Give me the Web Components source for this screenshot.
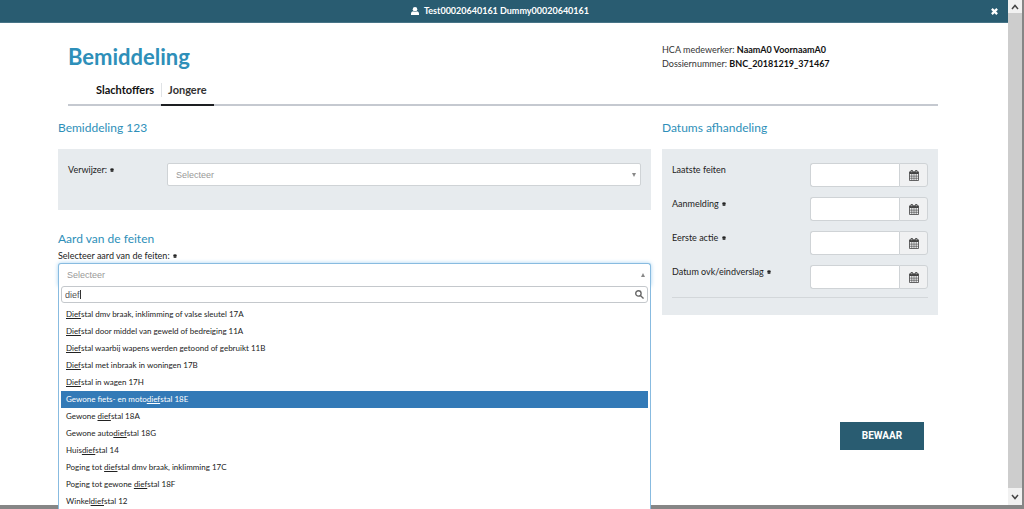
<!DOCTYPE html>
<html lang="nl">
<head>
<meta charset="utf-8">
<title>Bemiddeling</title>
<style>
html, body { margin: 0; height: 100%; overflow: hidden; }
body { background: #868686; font-family: Lato, "Open Sans", sans-serif; font-size: 9px; line-height: 14px; color: #222; }
</style>
</head>
<body>
<hca-dialog>
  <case-header slot="header"></case-header>
  <nav-tabs slot="header"></nav-tabs>
  <form-section slot="left" heading="Bemiddeling 123"><referrer-field></referrer-field></form-section>
  <facts-picker slot="left"></facts-picker>
  <form-section slot="right" heading="Datums afhandeling">
    <date-field label="Laatste feiten"></date-field>
    <date-field label="Aanmelding" required></date-field>
    <date-field label="Eerste actie" required></date-field>
    <date-field label="Datum ovk/eindverslag" required></date-field>
    <rule-line></rule-line>
  </form-section>
  <save-button slot="right">BEWAAR</save-button>
</hca-dialog>
<script>
const base = '*{box-sizing:border-box}button,input,select{font:inherit;margin:0}';
const define = (name, css, html, init) => customElements.define(name, class extends HTMLElement {
  connectedCallback() {
    if (this.shadowRoot) return;
    const root = this.attachShadow({ mode: 'open' });
    root.innerHTML = `<style>${base}${css}</style>${typeof html === 'function' ? html(this) : html}`;
    if (init) init(root, this);
  }
});

define('req-mark', ':host{display:inline-block;width:4px;height:4px;margin-left:1px;vertical-align:1px}svg{display:block;width:4px;height:4px}',
  '<svg viewBox="0 0 8 8" aria-label="verplicht" role="img"><path d="M4 0v8M.5 2l7 4M7.5 2l-7 4" stroke="#222" stroke-width="2.4"/></svg>');

define('scroll-rail', `
:host{display:flex;flex-direction:column;width:14px;background:#cdcdcd}
button{height:13px;padding:0;border:0;background:#f1f1f1;display:grid;place-items:center}
svg{width:8px;height:6px;fill:none;stroke:#444;stroke-width:1.5}
span{flex:1}
button:last-child{height:17px}`,
  `<button aria-label="Omhoog"><svg viewBox="0 0 8 6"><path d="M1 5l3-3.500 3 3.500"/></svg></button><span></span>
   <button aria-label="Omlaag"><svg viewBox="0 0 8 6"><path d="M1 1l3 3.500L7 1"/></svg></button>`);

define('hca-dialog', `
:host{display:flex;height:calc(100vh - 4px);margin-right:2px;background:#fff}
.page{flex:1;min-width:0}
.bar{display:flex;align-items:center;height:23px;padding:0 10px;background:#295c71;border-bottom:1px solid #477487;color:#fff}
.name{flex:1;display:flex;align-items:center;justify-content:center;gap:5px;font-weight:700;font-size:9px;line-height:22px}
.name svg{width:8px;height:8px;fill:#fff}
.close{display:grid;place-items:center;width:8px;height:8px;padding:0;border:0;background:none}
.close svg{width:7px;height:7px;stroke:#fff;stroke-width:2.6}
header{padding:0 70px 0 68px}
.cols{display:grid;grid-template-columns:593fr 276fr;gap:11px;padding:14px 70px 0 58px}
.right{display:flex;flex-direction:column}`,
  `<div class="page">
    <div class="bar"><div class="name"><svg viewBox="0 0 16 16"><circle cx="8" cy="4.500" r="4.500"/><path d="M0 16v-3q0-4 4-4.500 4 2.500 8 0 4 .5 4 4.500v3z"/></svg><span>Test00020640161 Dummy00020640161</span></div>
    <button class="close" aria-label="Sluiten"><svg viewBox="0 0 8 8"><path d="M1 1l6 6M7 1L1 7"/></svg></button></div>
    <header><slot name="header"></slot></header>
    <div class="cols"><div><slot name="left"></slot></div><div class="right"><slot name="right"></slot></div></div>
  </div><scroll-rail></scroll-rail>`);

define('case-header', `
:host{display:grid;grid-template-columns:583fr 276fr;gap:11px;padding:20px 0 6px}
h1{margin:0;font-size:22px;line-height:28px;color:#2e8fb9}
p{margin:0;color:#333}b{color:#111}`,
  `<h1>Bemiddeling</h1><div><p>HCA medewerker: <b>NaamA0 VoornaamA0</b></p><p>Dossiernummer: <b>BNC_20181219_371467</b></p></div>`);

define('nav-tabs', `
:host{display:block;border-bottom:2px solid #c5c9d0}
nav{display:flex;padding-left:21px}
a{position:relative;padding:6px 7px 7px;font-size:11px;line-height:14px;font-weight:700;color:#111;text-decoration:none}
a+a::before{content:"";position:absolute;left:0;top:6px;height:14px;border-left:1px solid #e0e3e6}
a.on{color:#333}
a.on::after{content:"";position:absolute;left:0;right:0;bottom:-2px;height:2px;background:#1d1f22}`,
  `<nav><a href="#slachtoffers">Slachtoffers</a><a class="on" href="#jongere" aria-current="page">Jongere</a></nav>`);

define('form-section', `
:host{display:block}
h2{margin:0 0 13px;font-size:12px;line-height:16px;font-weight:400;color:#2e8fb9}
.panel{background:#e7ebee;padding:14px 10px 17px}`,
  el => `<h2>${el.getAttribute('heading')}</h2><div class="panel"><slot></slot></div>`);

define('referrer-field', `
:host{display:grid;grid-template-columns:99px 1fr;align-items:start;height:30px}
label{line-height:14px}
.box{position:relative}
select{display:block;width:100%;height:23px;padding:0 8px;appearance:none;border:1px solid #cfd3d6;border-radius:2px;background:#fff;color:#999;font:9px "Liberation Sans",sans-serif}
.box::after{content:"";position:absolute;right:5px;top:10px;border:2px solid transparent;border-top:4px solid #888;border-bottom:0}`,
  `<label for="v">Verwijzer: <req-mark></req-mark></label><div class="box"><select id="v"><option>Selecteer</option></select></div>`);

define('rule-line', ':host{display:block;margin-top:-2px;border-top:1px solid #d3d7da}', '');

define('date-field', `
:host{display:flex;justify-content:space-between;height:24px;margin-bottom:10px}
label{line-height:14px}
.group{display:flex;width:118px}
input{flex:1;min-width:0;border:1px solid #cfd3d6;border-right:0;border-radius:3px 0 0 3px;background:#fff}
button{width:29px;padding:0;border:1px solid #cfd3d6;border-radius:0 3px 3px 0;background:#f0f1f2;display:grid;place-items:center}
svg{width:10px;height:11px}`,
  el => `<label for="d">${el.getAttribute('label')}${el.hasAttribute('required') ? ' <req-mark></req-mark>' : ''}</label>
  <div class="group"><input id="d" type="text"><button aria-label="Kalender"><svg viewBox="0 0 20 22"><path d="M1 4h18v17H1z" fill="#f0f1f2" stroke="#444" stroke-width="1.600"/><path d="M1 3h18v5H1z" fill="#444"/><path d="M5.500 8v13M10 8v13M14.500 8v13M1 12.300h18M1 16.600h18" stroke="#444" stroke-width="1.200"/><path d="M5.500 1v4M14.500 1v4" stroke="#444" stroke-width="4" stroke-linecap="round"/><path d="M5.500 1.500v3M14.500 1.500v3" stroke="#f0f1f2" stroke-width="1.200"/></svg></button></div>`);

define('save-button', `
:host{display:block;align-self:flex-end;margin:107px 14px 0 0}
button{width:84px;height:28px;border:0;padding:0;background:#295c71;color:#fff;font:700 10px/28px Roboto,sans-serif}`,
  '<button><slot></slot></button>');

const facts = ['[Dief]stal dmv braak, inklimming of valse sleutel 17A', '[Dief]stal door middel van geweld of bedreiging 11A',
  '[Dief]stal waarbij wapens werden getoond of gebruikt 11B', '[Dief]stal met inbraak in woningen 17B', '[Dief]stal in wagen 17H',
  'Gewone fiets- en moto[dief]stal 18E', 'Gewone [dief]stal 18A', 'Gewone auto[dief]stal 18G', 'Huis[dief]stal 14',
  'Poging tot [dief]stal dmv braak, inklimming 17C', 'Poging tot gewone [dief]stal 18F', 'Winkel[dief]stal 12'];

define('facts-picker', `
:host{display:block;margin-top:21px}
h2{margin:0;font-size:12px;line-height:16px;font-weight:400;color:#2e8fb9}
label{display:block;line-height:14px;padding-top:2px}
.combo{position:relative}
.toggle{display:flex;align-items:center;justify-content:space-between;width:100%;height:23px;padding:0 5px 0 8px;border:1px solid #88bbe0;border-bottom:0;border-radius:3px 3px 0 0;background:#fff;color:#999;font:9px "Liberation Sans",sans-serif;box-shadow:0 0 4px #a8d4f2}
.toggle::after{content:"";border:2px solid transparent;border-bottom:4px solid #888;border-top:0}
.menu{position:absolute;top:100%;left:0;right:0;padding:0 2px;border:1px solid #88bbe0;border-top:0;background:#fff}
.search{position:relative;margin-bottom:3px}
input{display:block;width:100%;height:17px;padding:0 3px;border:1px solid #c4c8cc;border-radius:3px;background:linear-gradient(#333,#333) 18px 3px/1px 9px no-repeat #fff;font:9px "Liberation Sans",sans-serif;color:#555;outline:0}
.search svg{position:absolute;right:4px;top:4px;width:9px;height:9px;fill:none;stroke:#666;stroke-width:1.500}
ul{margin:0;padding:0;list-style:none}
li{padding:0 5px;font-size:8px;line-height:17px;height:17px;white-space:nowrap}
li.on{background:#337ab7;color:#fff}`,
  `<h2>Aard van de feiten</h2><label for="t">Selecteer aard van de feiten: <req-mark></req-mark></label>
  <div class="combo"><button id="t" class="toggle" aria-expanded="true">Selecteer</button>
  <div class="menu"><div class="search"><input type="text" value="dief" aria-label="Zoeken"><svg viewBox="0 0 10 10"><circle cx="3.800" cy="3.800" r="3"/><path d="M6 6l3.500 3.500"/></svg></div>
  <ul role="listbox">${facts.map((f, i) => `<li role="option"${i === 5 ? ' class="on" aria-selected="true"' : ''}>${f.replace('[', '<u>').replace(']', '</u>')}</li>`).join('')}</ul></div></div>`);
</script>
</body>
</html>
